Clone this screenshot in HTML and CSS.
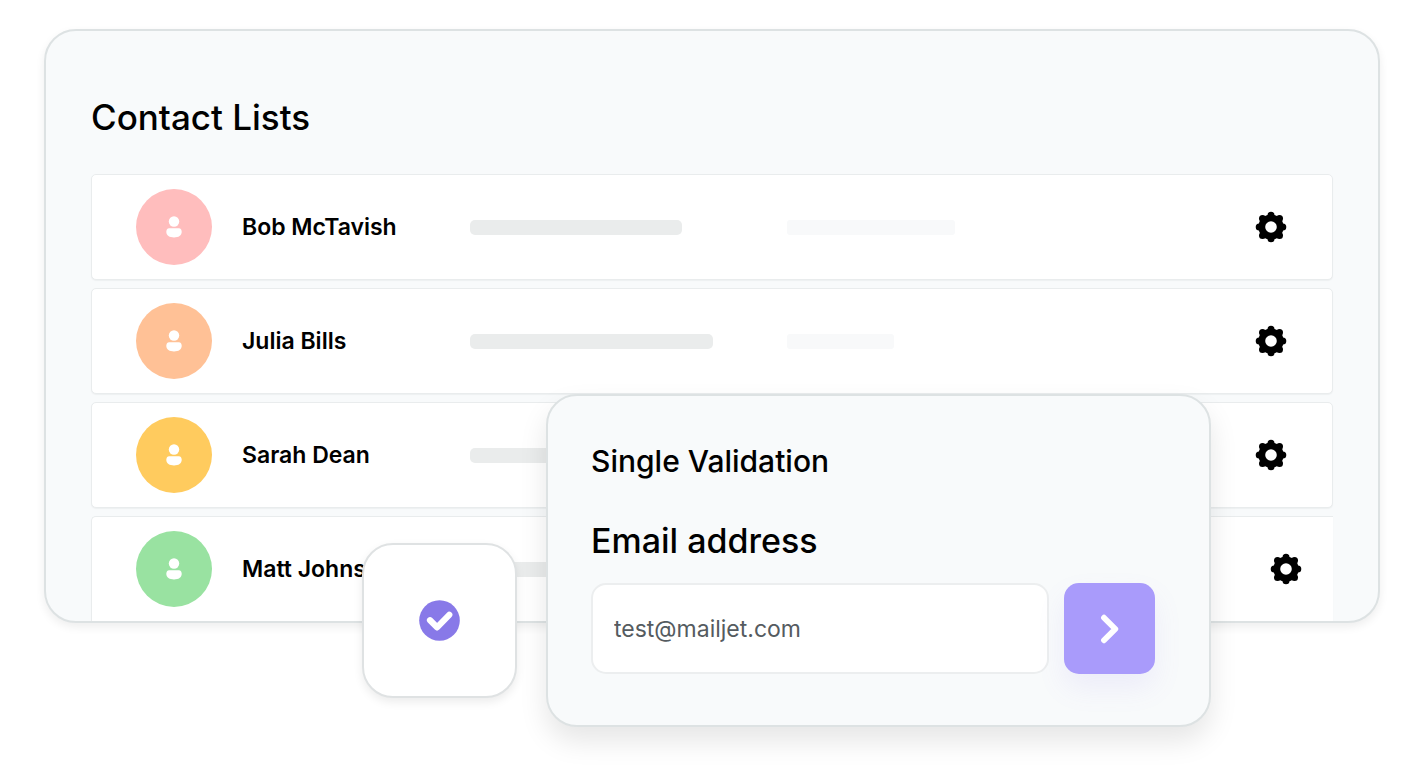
FILE: index.html
```html
<!DOCTYPE html>
<html lang="en">
<head>
<meta charset="utf-8">
<meta name="viewport" content="width=device-width, initial-scale=1">
<title>Contact Lists</title>
<link rel="stylesheet" href="styles.css">
</head>
<body>
<svg class="symbols" aria-hidden="true">
  <symbol id="person" viewBox="0 0 16 22">
    <circle cx="8" cy="5.500" r="5.200"/>
    <path d="M3.200 12.200H12.800C14.700 12.200 15.700 13.800 15.700 15.800C15.700 19.500 12.500 21.500 8 21.500S.3 19.500 .3 15.800C.3 13.800 1.300 12.200 3.200 12.200Z"/>
  </symbol>
  <symbol id="gear" viewBox="0 0 32 32">
    <circle cx="16" cy="16" r="9.200" fill="none" stroke="currentColor" stroke-width="6.800"/>
    <g fill="currentColor">
      <circle cx="16" cy="4.200" r="3.500"/><circle cx="16" cy="27.800" r="3.500"/>
      <circle cx="4.200" cy="16" r="3.500"/><circle cx="27.800" cy="16" r="3.500"/>
      <circle cx="7.500" cy="7.500" r="3.500"/><circle cx="24.500" cy="7.500" r="3.500"/>
      <circle cx="7.500" cy="24.500" r="3.500"/><circle cx="24.500" cy="24.500" r="3.500"/>
    </g>
  </symbol>
</svg>
<div class="stage">
  <main class="panel">
    <h1 class="panel-title">Contact Lists</h1>
    <ul class="contacts">
      <li class="contact">
        <span class="avatar avatar-pink"><svg class="person"><use href="#person"/></svg></span>
        <span class="name">Bob McTavish</span>
        <span class="bar bar-medium"></span>
        <span class="bar bar-faint"></span>
        <button class="settings" type="button" aria-label="Settings for Bob McTavish"><svg class="gear"><use href="#gear"/></svg></button>
      </li>
      <li class="contact">
        <span class="avatar avatar-orange"><svg class="person"><use href="#person"/></svg></span>
        <span class="name">Julia Bills</span>
        <span class="bar bar-long"></span>
        <span class="bar bar-faint bar-short"></span>
        <button class="settings" type="button" aria-label="Settings for Julia Bills"><svg class="gear"><use href="#gear"/></svg></button>
      </li>
      <li class="contact">
        <span class="avatar avatar-yellow"><svg class="person"><use href="#person"/></svg></span>
        <span class="name">Sarah Dean</span>
        <span class="bar bar-medium"></span>
        <span class="bar bar-faint"></span>
        <button class="settings" type="button" aria-label="Settings for Sarah Dean"><svg class="gear"><use href="#gear"/></svg></button>
      </li>
      <li class="contact contact-last">
        <span class="avatar avatar-green"><svg class="person"><use href="#person"/></svg></span>
        <span class="name">Matt Johns</span>
        <span class="bar bar-medium"></span>
        <span class="bar bar-faint"></span>
        <button class="settings" type="button" aria-label="Settings for Matt Johns"><svg class="gear"><use href="#gear"/></svg></button>
      </li>
    </ul>
  </main>

  <div class="status">
    <svg class="check" viewBox="0 0 42 42" role="img" aria-label="Valid">
      <circle cx="21" cy="21" r="20.800" fill="#8879e8"/>
      <path d="M11.300 20.800L18.500 28L31 15.200" fill="none" stroke="#fff" stroke-width="6.400" stroke-linecap="round" stroke-linejoin="round"/>
    </svg>
  </div>

  <form class="validation">
    <h2 class="validation-title">Single Validation</h2>
    <label class="label" for="email">Email address</label>
    <div class="field">
      <input class="input" id="email" type="email" value="test@mailjet.com">
      <button class="submit" type="button" aria-label="Validate">
        <svg class="chevron" viewBox="0 0 20 32"><path d="M4 4.700L15.300 16L4 27.300" fill="none" stroke="#fff" stroke-width="5.800" stroke-linecap="round" stroke-linejoin="round"/></svg>
      </button>
    </div>
  </form>
</div>
</body>
</html>
```
FILE: styles.css
```css
* {
  box-sizing: border-box;
}

body {
  margin: 0;
  background: #fff;
  color: #000;
  font-family: Inter, "Liberation Sans", sans-serif;
}

button {
  padding: 0;
  border: 0;
  cursor: pointer;
}

.symbols {
  position: absolute;
  width: 0;
  height: 0;
}

.stage {
  position: relative;
  padding: 29px 44px 150px;
}

.panel {
  padding: 64px 45px 0;
  border: 2px solid #dde2e3;
  border-radius: 32px;
  background: #f8fafb;
  box-shadow: 0 4px 10px rgba(0, 0, 0, 0.07);
  overflow: hidden;
}

.panel-title {
  margin: 0 0 35px;
  font-size: 35px;
  font-weight: 500;
  line-height: 44px;
}

.contacts {
  display: flex;
  flex-direction: column;
  gap: 8px;
  margin: 0;
  padding: 0;
  list-style: none;
}

.contact {
  display: grid;
  grid-template-columns: 76px 198px 287px 1fr 32px;
  align-items: center;
  gap: 30px;
  height: 106px;
  padding: 0 45px 0 44px;
  border: 1px solid #e9eced;
  border-radius: 5px;
  background: #fff;
  box-shadow: 0 1px 1px #edf0f1;
}

.contact-last {
  height: 105px;
  padding-right: 31px;
  border-right: 0;
  border-bottom: 0;
  border-radius: 5px 0 0 0;
}

.avatar {
  display: grid;
  place-items: center;
  height: 76px;
  border-radius: 50%;
}

.avatar-pink {
  background: #ffbdbd;
}

.avatar-orange {
  background: #ffc196;
}

.avatar-yellow {
  background: #ffcb5e;
}

.avatar-green {
  background: #99e2a1;
}

.person {
  width: 16px;
  height: 22px;
  fill: #fff;
}

.name {
  font-size: 23px;
  font-weight: 600;
  white-space: nowrap;
}

.bar {
  width: 212px;
  height: 15px;
  border-radius: 5px;
  background: #eaecec;
}

.bar-long {
  width: 243px;
}

.bar-faint {
  width: 168px;
  border-radius: 3px;
  background: #f8f9fa;
}

.bar-short {
  width: 107px;
}

.settings {
  width: 32px;
  height: 32px;
  background: none;
  color: #000;
}

.gear {
  display: block;
  width: 32px;
  height: 32px;
}

.status {
  position: absolute;
  top: 543px;
  left: 362px;
  display: grid;
  place-items: center;
  width: 155px;
  height: 155px;
  border: 2px solid #dfe2e3;
  border-radius: 31px;
  background: #fff;
  box-shadow: 0 4px 10px rgba(0, 0, 0, 0.08);
}

.check {
  width: 41px;
  height: 41px;
}

.validation {
  position: absolute;
  top: 394px;
  left: 546px;
  right: 213px;
  padding: 43px 54px 51px 43px;
  border: 2px solid #dde2e3;
  border-radius: 31px;
  background: #f8fafb;
  box-shadow: 0 14px 28px rgba(0, 0, 0, 0.1);
}

.validation-title {
  margin: 0 0 36px;
  font-size: 30px;
  font-weight: 500;
  line-height: 44px;
}

.label {
  display: block;
  margin-bottom: 20px;
  font-size: 34px;
  font-weight: 500;
  line-height: 44px;
}

.field {
  display: flex;
  gap: 15px;
}

.input {
  flex: 1;
  min-width: 0;
  height: 91px;
  padding: 0 21px;
  border: 2px solid #eceeef;
  border-radius: 15px;
  background: #fff;
  color: #555b60;
  font: 400 23px Inter, "Liberation Sans", sans-serif;
}

.submit {
  display: grid;
  place-items: center;
  width: 91px;
  height: 91px;
  border-radius: 15px;
  background: #a99bfb;
  box-shadow: 0 14px 28px rgba(136, 121, 232, 0.1);
}

.chevron {
  width: 20px;
  height: 32px;
}
```
